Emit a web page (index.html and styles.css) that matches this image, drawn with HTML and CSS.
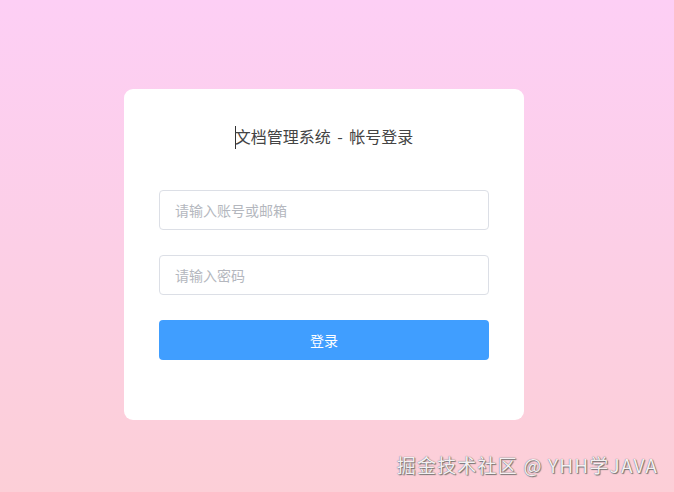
FILE: index.html
```html
<!DOCTYPE html>
<html lang="zh">
<head>
<meta charset="utf-8">
<title>文档管理系统 - 帐号登录</title>
<link rel="stylesheet" href="styles.css">
</head>
<body>
<main class="page">
  <section class="card">
    <h1 class="title"><span class="caret"></span>文档管理系统 - 帐号登录</h1>
    <form class="form">
      <input class="field" type="text" placeholder="请输入账号或邮箱">
      <input class="field" type="password" placeholder="请输入密码">
      <button class="btn" type="button">登录</button>
    </form>
  </section>
  <div class="watermark">掘金技术社区 @ YHH学JAVA</div>
</main>
</body>
</html>
```

FILE: styles.css
```css
html, body {
  margin: 0;
  padding: 0;
  height: 100%;
}
body {
  font-family: "Noto Sans CJK SC", "Liberation Sans", sans-serif;
  background: linear-gradient(180deg, #fdcff5 0%, #fccfe6 50%, #fccfd7 100%);
}
.page {
  position: relative;
  height: 100%;
  display: flex;
  flex-direction: column;
  align-items: center;
  padding-top: 89px;
  box-sizing: border-box;
}
.card {
  width: 400px;
  box-sizing: border-box;
  background: #fff;
  border-radius: 9px;
  padding: 35px 35px 60px;
  margin-right: 26px;
}
.title {
  margin: 0;
  font-size: 16px;
  font-weight: 400;
  line-height: 24px;
  color: #444;
  text-align: center;
  word-spacing: 3px;
}
.caret {
  display: inline-block;
  width: 1px;
  height: 23px;
  background: #333;
  vertical-align: -6px;
  margin-right: -1px;
}
.form {
  display: flex;
  flex-direction: column;
  gap: 25px;
  margin-top: 41px;
}
.field {
  height: 40px;
  box-sizing: border-box;
  border: 1px solid #dcdfe6;
  border-radius: 4px;
  padding: 0 15px;
  font-family: inherit;
  font-size: 14px;
  color: #606266;
  outline: none;
}
.field::placeholder {
  color: #b4b7be;
}
.btn {
  height: 40px;
  border: none;
  border-radius: 4px;
  background: #409eff;
  color: #fff;
  font-family: inherit;
  font-size: 14px;
}
.watermark {
  position: absolute;
  right: 16px;
  bottom: 14px;
  font-size: 19px;
  letter-spacing: 1.2px;
  color: #f4f0f2;
  text-shadow: 0 0 1px #555, 1px 1px 1px #777;
}
```
